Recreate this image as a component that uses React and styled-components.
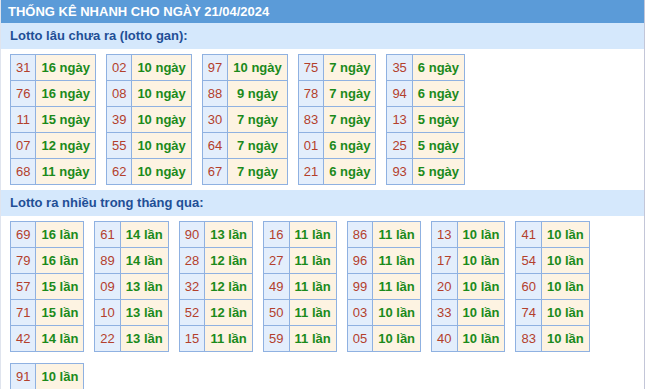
import React from "react";
import styled, { createGlobalStyle } from "styled-components";

const Global = createGlobalStyle`
  body {
    margin: 0;
    background: #ffffff;
    font-family: "Liberation Sans", Arial, sans-serif;
  }
`

const Box = styled.div`
  width: 643px;
  border-left: 1px solid #dfe4ee;
  border-right: 1px solid #c3c6d8;
  min-height: 389px;
`

const Header = styled.div`
  height: 23px;
  line-height: 23px;
  padding-left: 7px;
  background: #5b9bd8;
  color: #ffffff;
  font-size: 13px;
  font-weight: bold;
`

const SubHeader = styled.div`
  height: 26px;
  line-height: 26px;
  padding-left: 9px;
  background: #d5e8fc;
  color: #1f4f96;
  font-size: 13px;
  font-weight: bold;
`

const Tables = styled.div`
  display: flex;
  flex-wrap: wrap;
  align-items: flex-start;
  column-gap: 10px;
  row-gap: 11px;
  padding: 5px 0 5px 9px;
`

const Table = styled.table`
  border-collapse: collapse;
  font-size: 13px;
`

const Cell = styled.td`
  height: 25px;
  padding: 0 5px;
  border: 1px solid #8fb1e1;
  text-align: center;
  white-space: nowrap;
  background: ${(p) => (p.$num ? "#e3eefc" : "#fdf3e2")};
  color: ${(p) => (p.$num ? "#b3402c" : "#1b8a1b")};
  font-weight: ${(p) => (p.$num ? "normal" : "bold")};
`

const gan = [
  [["31", 16], ["76", 16], ["11", 15], ["07", 12], ["68", 11]],
  [["02", 10], ["08", 10], ["39", 10], ["55", 10], ["62", 10]],
  [["97", 10], ["88", 9], ["30", 7], ["64", 7], ["67", 7]],
  [["75", 7], ["78", 7], ["83", 7], ["01", 6], ["21", 6]],
  [["35", 6], ["94", 6], ["13", 5], ["25", 5], ["93", 5]],
]

const nhieu = [
  [["69", 16], ["79", 16], ["57", 15], ["71", 15], ["42", 14]],
  [["61", 14], ["89", 14], ["09", 13], ["10", 13], ["22", 13]],
  [["90", 13], ["28", 12], ["32", 12], ["52", 12], ["15", 11]],
  [["16", 11], ["27", 11], ["49", 11], ["50", 11], ["59", 11]],
  [["86", 11], ["96", 11], ["99", 11], ["03", 10], ["05", 10]],
  [["13", 10], ["17", 10], ["20", 10], ["33", 10], ["40", 10]],
  [["41", 10], ["54", 10], ["60", 10], ["74", 10], ["83", 10]],
  [["91", 10]],
]

function StatTable({ rows, unit }) {
  return (
    <Table>
      <tbody>
        {rows.map(([num, count]) => (
          <tr key={num}>
            <Cell $num>{num}</Cell>
            <Cell>{count} {unit}</Cell>
          </tr>
        ))}
      </tbody>
    </Table>
  )
}

export default function App() {
  return (
    <>
      <Global />
      <Box>
        <Header>THỐNG KÊ NHANH CHO NGÀY 21/04/2024</Header>
        <SubHeader>Lotto lâu chưa ra (lotto gan):</SubHeader>
        <Tables>
          {gan.map((rows, i) => (
            <StatTable key={i} rows={rows} unit="ngày" />
          ))}
        </Tables>
        <SubHeader>Lotto ra nhiều trong tháng qua:</SubHeader>
        <Tables>
          {nhieu.map((rows, i) => (
            <StatTable key={i} rows={rows} unit="lần" />
          ))}
        </Tables>
      </Box>
    </>
  )
}
